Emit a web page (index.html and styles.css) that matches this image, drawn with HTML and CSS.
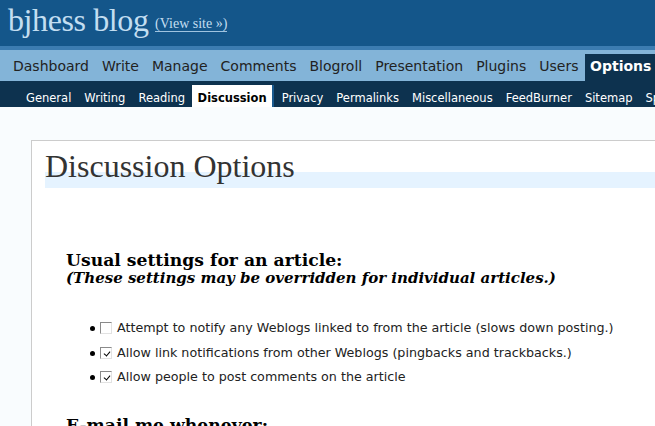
FILE: index.html
```html
<!DOCTYPE html>
<html>
<head>
<meta charset="utf-8">
<link rel="stylesheet" href="styles.css">
</head>
<body>
<div class="header">
  <h1 class="site-title">bjhess blog <a class="view-site" href="#">(View site &raquo;)</a></h1>
</div>
<div class="strip"></div>
<ul class="adminmenu">
  <li><a href="#">Dashboard</a></li>
  <li><a href="#">Write</a></li>
  <li><a href="#">Manage</a></li>
  <li><a href="#">Comments</a></li>
  <li><a href="#">Blogroll</a></li>
  <li><a href="#">Presentation</a></li>
  <li><a href="#">Plugins</a></li>
  <li><a href="#">Users</a></li>
  <li class="current"><a href="#">Options</a></li>
</ul>
<ul class="submenu">
  <li><a href="#">General</a></li>
  <li><a href="#">Writing</a></li>
  <li><a href="#">Reading</a></li>
  <li class="current"><a href="#">Discussion</a></li>
  <li><a href="#">Privacy</a></li>
  <li><a href="#">Permalinks</a></li>
  <li><a href="#">Miscellaneous</a></li>
  <li><a href="#">FeedBurner</a></li>
  <li><a href="#">Sitemap</a></li>
  <li><a href="#">Spam</a></li>
</ul>
<div class="content">
  <div class="wrap">
    <h2 class="page-title">Discussion Options</h2>
    <h3 class="section">Usual settings for an article:<br><em>(These settings may be overridden for individual articles.)</em></h3>
    <ul class="options">
      <li><span class="cb"></span>Attempt to notify any Weblogs linked to from the article (slows down posting.)</li>
      <li><span class="cb checked"></span>Allow link notifications from other Weblogs (pingbacks and trackbacks.)</li>
      <li><span class="cb checked"></span>Allow people to post comments on the article</li>
    </ul>
    <h3 class="section">E-mail me whenever:</h3>
  </div>
</div>
</body>
</html>
```
FILE: styles.css
```css
html, body {
  margin: 0;
  padding: 0;
  background: #f9fcfe;
  overflow: hidden;
  width: 655px;
  height: 426px;
}
body {
  font-family: "DejaVu Sans", "Noto Sans", sans-serif;
}
.header {
  background: #14568a;
  height: 46px;
  padding: 0 0 0 8px;
  box-sizing: border-box;
}
.site-title {
  margin: 0;
  font-family: "Liberation Serif", serif;
  font-weight: normal;
  font-size: 32px;
  line-height: 40px;
  color: #c3def1;
  letter-spacing: -0.4px;
  white-space: nowrap;
}
.view-site {
  font-size: 14px;
  color: #c3def1;
  text-decoration: none;
  border-bottom: 1px solid #9fc3e0;
  letter-spacing: 0;
  position: relative;
  top: -3px;
  margin-left: -1px;
}
.strip {
  height: 4px;
  background: #3c7cb1;
}
.adminmenu {
  list-style: none;
  margin: 0;
  padding: 4px 0 0 6.5px;
  height: 31px;
  box-sizing: border-box;
  background: #83b4d8;
  display: flex;
  white-space: nowrap;
}
.adminmenu li a {
  display: block;
  padding: 0 6.5px;
  height: 27px;
  line-height: 25px;
  font-size: 14px;
  color: #222;
  text-decoration: none;
}
.adminmenu li.current a {
  background: #0d324f;
  color: #fff;
  font-weight: bold;
  padding: 0 5px;
}
.submenu {
  list-style: none;
  margin: 0;
  padding: 4px 0 0 19.5px;
  height: 26px;
  box-sizing: border-box;
  background: #0d324f;
  display: flex;
  white-space: nowrap;
}
.submenu li a {
  display: block;
  padding: 0 6.5px;
  height: 22px;
  line-height: 26px;
  font-size: 11.5px;
  color: #fff;
  text-decoration: none;
}
.submenu li.current a {
  background: #fff;
  color: #000;
  font-weight: bold;
  border-right: 2px solid #1a5a8f;
  padding: 0 5px 0 6px;
  line-height: 26px;
  overflow: hidden;
}
.submenu li.current + li a {
  padding-left: 8px;
}
.content {
  padding: 33px 0 0 31px;
}
.wrap {
  background: #fff;
  border: 1px solid #ccc;
  border-right: none;
  padding: 0 0 0 13px;
  height: 400px;
}
.page-title {
  margin: 0;
  padding-top: 8px;
  font-family: "Liberation Serif", serif;
  font-weight: normal;
  font-size: 32px;
  line-height: 34px;
  color: #333;
  border-bottom: 16px solid #e5f3ff;
  height: 23px;
  overflow: visible;
}
.section {
  margin: 63px 0 0 21px;
  font-family: "DejaVu Serif", serif;
  font-weight: bold;
  font-size: 17.2px;
  line-height: 19px;
  color: #000;
}
.section em {
  font-size: 15px;
  display: block;
  margin-top: -1px;
}
.options {
  margin: 28px 0 0 0;
  padding: 0 0 0 72px;
  font-size: 12.7px;
  color: #222;
  list-style: none;
}
.options li {
  position: relative;
  line-height: 24.5px;
  white-space: nowrap;
}
.options li::before {
  content: "";
  position: absolute;
  left: -27px;
  top: 10px;
  width: 5px;
  height: 5px;
  border-radius: 50%;
  background: #000;
}
.cb {
  display: inline-block;
  width: 12px;
  height: 12px;
  border: 1px solid #8a8a8a;
  border-right-color: #e2e2e2;
  border-bottom-color: #e2e2e2;
  margin: 0 5px 0 -17px;
  vertical-align: -2px;
  box-sizing: border-box;
  position: relative;
}
.cb.checked::after {
  content: "";
  position: absolute;
  left: 4px;
  top: 2px;
  width: 3px;
  height: 5px;
  border-right: 1px solid #000;
  border-bottom: 1px solid #000;
  transform: rotate(40deg);
}
.options + .section {
  margin-top: 26px;
}
```
